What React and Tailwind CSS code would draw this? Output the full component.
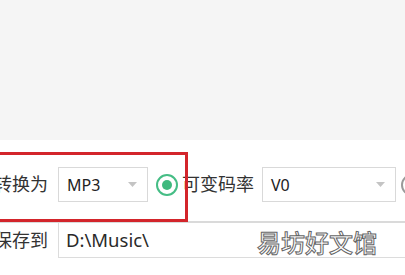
import React from 'react';

const Arrow = () => (
  <svg width="9" height="5" viewBox="0 0 9 5" className="shrink-0">
    <path d="M0 0h9L4.5 5z" fill="#c4c4c4" />
  </svg>
);

const Select = ({ value, width }) => (
  <div className={`${width} shrink-0 h-[35px] border border-[#d9d9d9] bg-white flex items-center justify-between pl-[8px] pr-[10px]`}>
    <span className="text-[16px] text-[#222]">{value}</span>
    <Arrow />
  </div>
);

const App = () => {
  return (
    <div className="relative w-[405px] h-[275px] overflow-hidden bg-white font-['Noto_Sans','Noto_Sans_CJK_SC',sans-serif] text-[#333]">
      <div className="h-[140px] bg-[#f5f5f5]" />

      <div className="h-[81px] pt-[27px] whitespace-nowrap">
        <div className="h-[35px] flex items-center">
          <div className="-ml-[6px] w-[64px] shrink-0 text-[18px]">转换为</div>
          <Select value="MP3" width="w-[90px]" />
          <div className="ml-[8px] w-[22px] h-[22px] shrink-0 rounded-full border-2 border-[#45bd85] flex items-center justify-center">
            <div className="w-[10px] h-[10px] rounded-full bg-[#3fb97e]" />
          </div>
          <div className="ml-[4px] w-[80px] shrink-0 text-[18px]">可变码率</div>
          <Select value="V0" width="w-[134px]" />
          <div className="ml-[5px] w-[22px] h-[22px] shrink-0 rounded-full border-2 border-[#9a9a9a]" />
        </div>
      </div>

      <div className="border-t-2 border-[#dadada] flex whitespace-nowrap">
        <div className="-ml-[6px] w-[64px] h-[35px] shrink-0 flex items-center text-[18px]">保存到</div>
        <div className="flex-1 h-[35px] border-l border-b border-[#dcdcdc] flex items-center pl-[7px] text-[18.5px] text-[#2a2a2a]">
          D:\Music\
        </div>
      </div>

      {/* annotation box */}
      <div className="absolute left-[-10px] top-[152px] w-[198px] h-[70px] border-[3px] border-[#d3252b]" />

      {/* watermark */}
      <div className="absolute left-[257px] top-[227px] text-[24px] leading-[30px] text-white font-medium [-webkit-text-stroke:1px_#666] font-['Noto_Sans_CJK_SC',sans-serif]">
        易坊好文馆
      </div>
    </div>
  );
};

export default App;
